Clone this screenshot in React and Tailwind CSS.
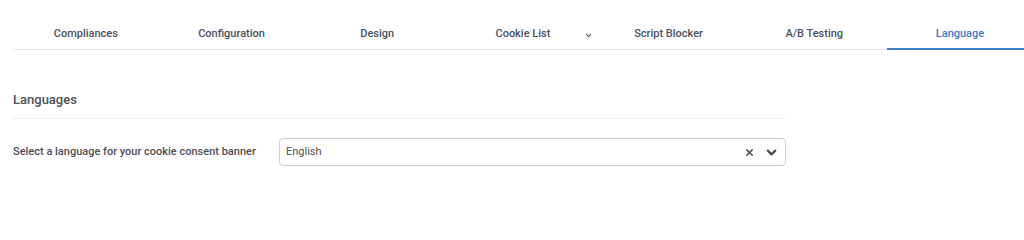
import React from 'react';
import { X, ChevronDown } from 'lucide-react';

const tabs = [
  'Compliances',
  'Configuration',
  'Design',
  'Cookie List',
  'Script Blocker',
  'A/B Testing',
  'Language',
];

const App = () => {
  return (
    <div className="w-[1024px] h-[206px] overflow-hidden bg-white font-['Roboto',sans-serif]">
      <div className="pl-[13px]">
        <div className="flex w-[1011px]">
          {tabs.map((tab) => {
            const active = tab === 'Language';
            return (
              <div
                key={tab}
                className={
                  active
                    ? 'relative shrink-0 w-[145.7px] h-[50px] pt-[26px] flex justify-center text-[11px] leading-[16px] font-medium text-[#3d7cc9] border-b-2 border-[#3d7cc9]'
                    : 'relative shrink-0 w-[145.7px] h-[50px] pt-[26px] flex justify-center text-[11px] leading-[16px] font-medium text-[#4a5262] border-b border-[#e6e8eb]'
                }
              >
                {tab}
                {tab === 'Cookie List' && (
                  <ChevronDown
                    className="absolute right-[3px] top-[31px] text-[#4a5262]"
                    size={9}
                    strokeWidth={2.75}
                  />
                )}
              </div>
            );
          })}
        </div>
      </div>

      <div className="pl-[13px] w-[786px] pt-[41px]">
        <div className="text-[13px] leading-[18px] font-medium text-[#4d4f53] pb-[9px] border-b border-[#eeeeee]">
          Languages
        </div>
        <div className="flex items-center pt-[19px]">
          <div className="w-[266px] text-[11px] font-medium text-[#4d4f53]">
            Select a language for your cookie consent banner
          </div>
          <div className="flex-1 h-[28px] border border-[#cfd2d6] rounded-[4px] flex items-center pl-[6px] pr-[6px]">
            <span className="flex-1 text-[11px] text-[#4d4f53]">English</span>
            <X className="text-[#4d4f53] mr-[9px]" size={11} strokeWidth={3.5} />
            <ChevronDown className="text-[#4d4f53]" size={15} strokeWidth={3.5} />
          </div>
        </div>
      </div>
    </div>
  );
};

export default App;
